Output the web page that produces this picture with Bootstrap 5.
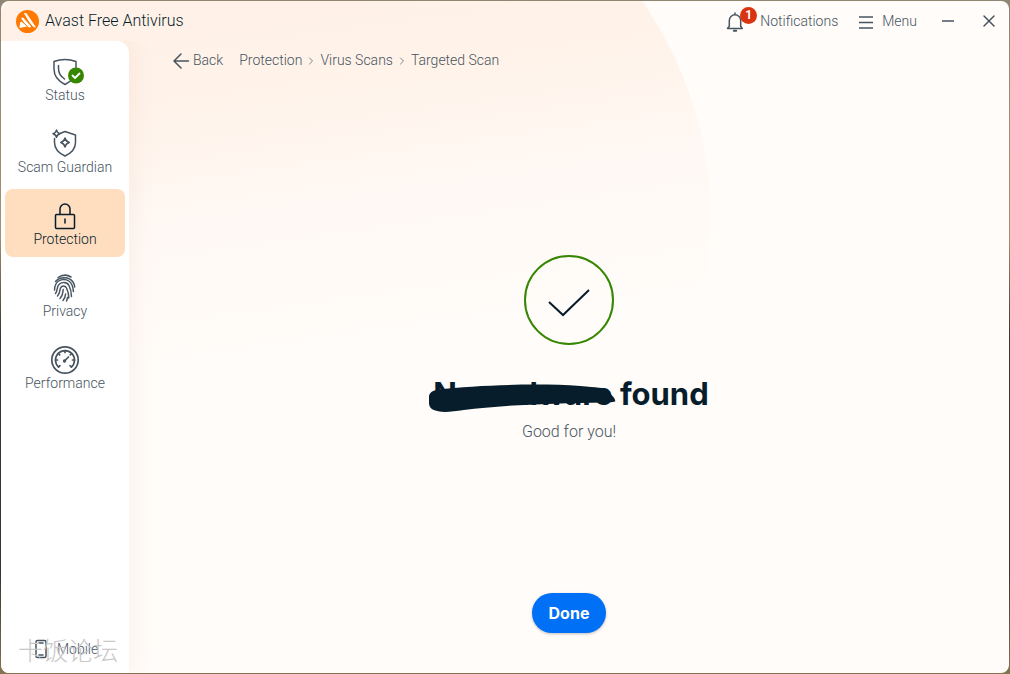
<!DOCTYPE html>
<html lang="en">
<head>
<meta charset="utf-8">
<meta name="viewport" content="width=device-width, initial-scale=1">
<title>Avast Free Antivirus</title>
<link href="https://cdn.jsdelivr.net/npm/bootstrap@5.3.0/dist/css/bootstrap.min.css" rel="stylesheet">
<style>
:root { --ink: #071d2b; --soft: #47545f; --cream: #fffcf9; }
body { font-family: Roboto, "Liberation Sans", sans-serif; font-size: 14px; line-height: 20px; font-weight: 300; color: var(--soft); background: linear-gradient(#8f8773, #a5906a 35%, #3a3430 50%, #3a3430 85%, #857451); padding: 1px; }
a { color: inherit; text-decoration: none; }
svg { display: block; flex: none; overflow: visible; fill: none; stroke: currentColor; stroke-width: 1.5; stroke-linecap: round; stroke-linejoin: round; }
svg.logo, svg.scribble { stroke: none; }
svg.flat { stroke-linecap: butt; }
svg.hair { stroke-width: 1; opacity: .7; }
.app-window { border-radius: 8px; background: var(--cream); min-height: calc(100vh - 2px); isolation: isolate; }
.glow { position: absolute; inset: 0; z-index: -1; overflow: hidden; border-radius: 8px; }
.glow::before { content: ""; position: absolute; left: -62px; top: -166px; width: 772px; height: 772px; border-radius: 50%; background: linear-gradient(172deg, #fff1e7 24%, #fff3ea 35%, #fff8f3 47%, var(--cream) 64%); }
.title-bar { height: 40px; padding: 0 14px 0 15px; }
.app-title { font-size: 16px; color: var(--ink); margin-left: 6px; }
.bar-tools { gap: 22px; }
.bar-btn { border: 0; background: none; padding: 0; font-weight: 300; color: var(--soft); }
.count { position: absolute; left: 14px; top: -4px; width: 17px; height: 17px; line-height: 17px; border-radius: 50%; background: #da3311; color: #fff; font-size: 12px; font-weight: 700; text-align: center; }
.side { width: 128px; background: #fff; border-radius: 0 12px 0 8px; padding: 4px; box-shadow: 4px 0 24px rgba(190, 110, 80, .08); clip-path: inset(0 -40px 0 0); }
.side-item { height: 68px; border-radius: 8px; padding-top: 12px; line-height: 17px; }
.side-item svg { width: 32px; height: 30px; }
.side-item.active { background: #ffddbf; color: var(--ink); }
.mobile-link { padding: 0 0 10px 29px; gap: 9px; }
.watermark { position: absolute; left: 17px; bottom: 9px; font: 300 25px/30px "Noto Sans CJK SC", sans-serif; color: #c8c8c8; pointer-events: none; white-space: nowrap; }
.crumbs { padding: 9px 0 0 44px; }
.crumbs .trail { gap: 6px; margin-left: 16px; }
.result { padding-top: 34px; }
.headline { font-family: Inter, sans-serif; font-size: 31px; line-height: 40px; font-weight: 700; color: var(--ink); margin: 29px 0 8px 4px; }
.scribble { position: absolute; left: -4px; top: 12px; width: calc(100% + 7px); height: 27px; fill: var(--ink); }
.subline { font-size: 16px; line-height: 20px; margin: 0; }
.done { height: 40px; padding: 0 17px; border: 0; border-radius: 20px; background: #0070f6; font: 700 16px/20px Inter, sans-serif; box-shadow: 0 1px 3px rgba(0, 0, 0, .25); margin-bottom: 40px; }
</style>
</head>
<body>
<div class="app-window position-relative d-flex flex-column">
  <div class="glow"></div>
  <header class="title-bar d-flex align-items-center">
    <svg class="logo" width="23" height="23" viewBox="0 0 24 24"><circle cx="12" cy="12" r="12" fill="#ff7800"/><g fill="#fff"><path d="M8.300 3.500c1-.8 2.400-.6 3 .5l9 13.200c.4.700-.2 1.400-1 1.100L16 16.500z"/><path d="M5.400 8.600c.6-.9 1.700-.9 2.500-.2l7.400 8.200c.6.800 0 1.600-.8 1.600l-3.200-.5z"/><path d="M4.300 13.200c.4-.9 1.300-1.100 2.100-.6l4.300 3.500c.6.600.3 1.400-.5 1.500l-6.600 1.300z"/></g><path d="M7.800 6.500l9.500 11M5.900 11.400l6.600 6.200" stroke="#ff7800" stroke-width="1"/></svg>
    <span class="app-title">Avast Free Antivirus</span>
    <div class="bar-tools ms-auto d-flex align-items-center">
      <button type="button" class="bar-btn position-relative d-flex align-items-center">
        <svg width="18" height="20" viewBox="0 0 18 20"><g transform="translate(0 2)"><path d="M9 0v1.500M1.500 15.500h14.800l-1.600-2.300V7.500a5.700 5.700 0 0 0-11.400 0v5.700z"/><path d="M7.800 17.700h2.400" stroke-width="2"/></g></svg>
        <span class="count">1</span><span class="ps-3">Notifications</span>
      </button>
      <button type="button" class="bar-btn d-flex align-items-center">
        <svg class="flat me-2" width="14" height="14" viewBox="0 0 14 14"><path d="M-1 3h14M-1 8.500h14M-1 14h14"/></svg>Menu
      </button>
      <button type="button" class="bar-btn ps-1" aria-label="Minimize"><svg class="flat" width="12" height="12" viewBox="0 0 12 12"><path d="M-1 6h12"/></svg></button>
      <button type="button" class="bar-btn ps-1" aria-label="Close"><svg width="14" height="12" viewBox="0 0 14 12"><path d="M3 1l10 10M13 1L3 11"/></svg></button>
    </div>
  </header>
  <div class="flex-grow-1 d-flex">
    <nav class="side position-relative d-flex flex-column gap-1">
      <a href="#" class="side-item d-flex flex-column align-items-center"><svg viewBox="0 0 32 30"><path d="M5 4.500Q16 .500 27 4.500V12c0 7-4 12-11 15.500C9 24 5 19 5 12z"/><path d="M9.500 8.500v3c0 4.500 2.300 8 6 10.500"/><circle cx="27" cy="18.500" r="8" fill="#358600" stroke="none"/><path d="M23.500 18.500l2.500 2.500 4.500-4.500" stroke="#fff" stroke-width="1.800"/></svg>Status</a>
      <a href="#" class="side-item d-flex flex-column align-items-center"><svg viewBox="0 0 32 30"><path d="M11 4.500l5-2 10.500 3.500v7.500c0 6-4 10.500-10.500 13.500C9.500 24 5.500 19.500 5.500 13.500v-4"/><path d="M16 9q.8 3.500 4.200 4.500Q16.800 14.500 16 18q-.8-3.500-4.200-4.500Q15.200 12.500 16 9zM7.500 1Q8 4 11 4.700 8 5.500 7.500 8.500 7 5.500 4 4.700 7 4 7.500 1z"/></svg>Scam Guardian</a>
      <a href="#" class="side-item active d-flex flex-column align-items-center" aria-current="page"><svg viewBox="0 0 32 30"><rect x="6.500" y="13.500" width="19" height="14" rx="1"/><path d="M11 13V8a5 5 0 0 1 10 0v5M16 18v4"/></svg>Protection</a>
      <a href="#" class="side-item d-flex flex-column align-items-center"><svg viewBox="0 0 32 30"><path d="M9 4.500C13 1.800 18 1.500 22 4M6.500 8.500C11 3.500 20 3.500 24 9c1.200 1.700 1.600 3.200 1.700 5M5.500 17c.3-1.500 0-3 .8-4.500 2-6 9-7.500 13.500-4.500 3.700 2.500 4.400 6.500 4.600 10.500M6.500 20.500c1.800-2 1.400-4.500 2.300-7 2-5 9-5 11.200-1 1.800 3.500 2.400 7 2.500 11M8.500 23c2.700-2.500 2-5.500 3-8 1.200-2.700 4.700-2.700 6 0 1.500 3 2.300 6.500 2.300 10M11 25.500c3.200-3 2.700-6 3.200-9M14 27.500c1.600-2 2.400-4 2.600-6.500M17.500 28c.5-1 .8-2 .9-3.500"/></svg>Privacy</a>
      <a href="#" class="side-item d-flex flex-column align-items-center"><svg viewBox="0 0 32 30"><g stroke-width="1.700"><circle cx="16" cy="15" r="13.200"/><path d="M9.500 22a9.500 9.500 0 1 1 13 0"/><path d="M9.500 22l1.500-1.300M22.500 22L21 20.700M6.500 15h2M25.500 15h-2M9.300 8.500l1.400 1.400M22.700 8.500l-1.400 1.400M16 5.500v2M15.500 16l4-4"/></g><circle cx="15.500" cy="16" r="1.700" fill="currentColor" stroke="none"/></svg>Performance</a>
      <a href="#" class="mobile-link mt-auto d-flex align-items-center"><svg width="14" height="20" viewBox="0 0 14 20"><rect x="2" y="1.500" width="10" height="17" rx="1.500"/><path d="M5 4h4M5 16h4"/></svg>Mobile</a>
      <span class="watermark">卡饭论坛</span>
    </nav>
    <main class="flex-grow-1 d-flex flex-column">
      <div class="crumbs d-flex align-items-center">
        <a href="#" class="d-flex align-items-center gap-1"><svg width="16" height="16" viewBox="0 0 16 16"><path d="M15.500 9H1M8 2L1 9l7 7"/></svg>Back</a>
        <nav class="trail d-flex align-items-center" aria-label="breadcrumb">
          <a href="#">Protection</a>
          <svg class="hair" width="6" height="8" viewBox="0 0 6 8"><path d="M1.500 2l3 3-3 3"/></svg>
          <a href="#">Virus Scans</a>
          <svg class="hair" width="6" height="8" viewBox="0 0 6 8"><path d="M1.500 2l3 3-3 3"/></svg>
          <a href="#">Targeted Scan</a>
        </nav>
      </div>
      <section class="result flex-grow-1 d-flex flex-column align-items-center justify-content-center">
        <svg class="flat" width="90" height="90" viewBox="0 0 90 90"><circle cx="45" cy="45" r="44" stroke="#358600" stroke-width="2"/><path d="M25 47l14 13 26-25" stroke="#071d2b" stroke-width="2" stroke-linejoin="miter"/></svg>
        <h1 class="headline"><span class="position-relative d-inline-block">No malware<svg class="scribble" viewBox="0 0 187 28" preserveAspectRatio="none"><path d="M0 10Q1 5 9 3.500C50-1 110-3 152 0c16 2 24 1 28 5 3 5 7 7 7 11q-4 1-9 1C120 18 70 20 35 25Q0 31 0 18z"/></svg></span> found</h1>
        <p class="subline">Good for you!</p>
      </section>
      <div class="text-center"><button type="button" class="btn btn-primary done">Done</button></div>
    </main>
  </div>
</div>
<script src="https://cdn.jsdelivr.net/npm/bootstrap@5.3.0/dist/js/bootstrap.bundle.min.js"></script>
</body>
</html>
